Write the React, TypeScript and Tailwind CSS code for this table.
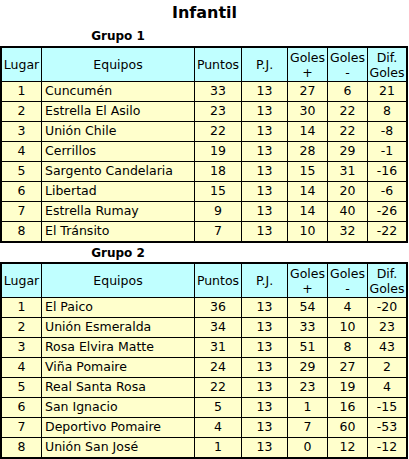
import React from "react";

type Row = [number, string, number, number, number, number, number];

const grupo1: Row[] = [
  [1, "Cuncumén", 33, 13, 27, 6, 21],
  [2, "Estrella El Asilo", 23, 13, 30, 22, 8],
  [3, "Unión Chile", 22, 13, 14, 22, -8],
  [4, "Cerrillos", 19, 13, 28, 29, -1],
  [5, "Sargento Candelaria", 18, 13, 15, 31, -16],
  [6, "Libertad", 15, 13, 14, 20, -6],
  [7, "Estrella Rumay", 9, 13, 14, 40, -26],
  [8, "El Tránsito", 7, 13, 10, 32, -22],
];

const grupo2: Row[] = [
  [1, "El Paico", 36, 13, 54, 4, -20],
  [2, "Unión Esmeralda", 34, 13, 33, 10, 23],
  [3, "Rosa Elvira Matte", 31, 13, 51, 8, 43],
  [4, "Viña Pomaire", 24, 13, 29, 27, 2],
  [5, "Real Santa Rosa", 22, 13, 23, 19, 4],
  [6, "San Ignacio", 5, 13, 1, 16, -15],
  [7, "Deportivo Pomaire", 4, 13, 7, 60, -53],
  [8, "Unión San José", 1, 13, 0, 12, -12],
];

const cols = "grid grid-cols-[40px_153px_47px_46px_40px_40px_38px]";

function Tabla({ rows }: { rows: Row[] }) {
  return (
    <div className="w-[408px] border-2 border-black text-[12.5px] text-black">
      <div className={`${cols} h-[34px] bg-[#c0ffff] border-b border-black leading-[15px]`}>
        <div className="flex items-center justify-center border-r border-black">Lugar</div>
        <div className="flex items-center justify-center border-r border-black">Equipos</div>
        <div className="flex items-center justify-center border-r border-black">Puntos</div>
        <div className="flex items-center justify-center border-r border-black">P.J.</div>
        <div className="flex flex-col items-center justify-center border-r border-black">
          <span>Goles</span>
          <span>+</span>
        </div>
        <div className="flex flex-col items-center justify-center border-r border-black">
          <span>Goles</span>
          <span>-</span>
        </div>
        <div className="flex flex-col items-center justify-center">
          <span>Dif.</span>
          <span>Goles</span>
        </div>
      </div>
      {rows.map((r, i) => (
        <div
          key={i}
          className={`${cols} bg-[#ffffcc] ${i < rows.length - 1 ? "h-[20px] border-b border-black" : "h-[19px]"}`}
        >
          <div className="flex items-center justify-center border-r border-black">{r[0]}</div>
          <div className="flex items-center pl-[3px] border-r border-black whitespace-nowrap">{r[1]}</div>
          <div className="flex items-center justify-center border-r border-black">{r[2]}</div>
          <div className="flex items-center justify-center border-r border-black">{r[3]}</div>
          <div className="flex items-center justify-center border-r border-black">{r[4]}</div>
          <div className="flex items-center justify-center border-r border-black">{r[5]}</div>
          <div className="flex items-center justify-center">{r[6]}</div>
        </div>
      ))}
    </div>
  );
}

export default function App() {
  return (
    <div className="w-[409px] h-[459px] bg-white font-['DejaVu_Sans',Verdana,sans-serif] overflow-hidden">
      <div className="h-[26px] flex items-center justify-center text-[16px] font-bold text-black">
        Infantil
      </div>
      <div className="w-[236px] h-[20px] flex items-center justify-center text-[12px] font-bold text-black">
        Grupo 1
      </div>
      <Tabla rows={grupo1} />
      <div className="w-[236px] h-[19px] flex items-center justify-center text-[12px] font-bold text-black">
        Grupo 2
      </div>
      <Tabla rows={grupo2} />
    </div>
  );
}
